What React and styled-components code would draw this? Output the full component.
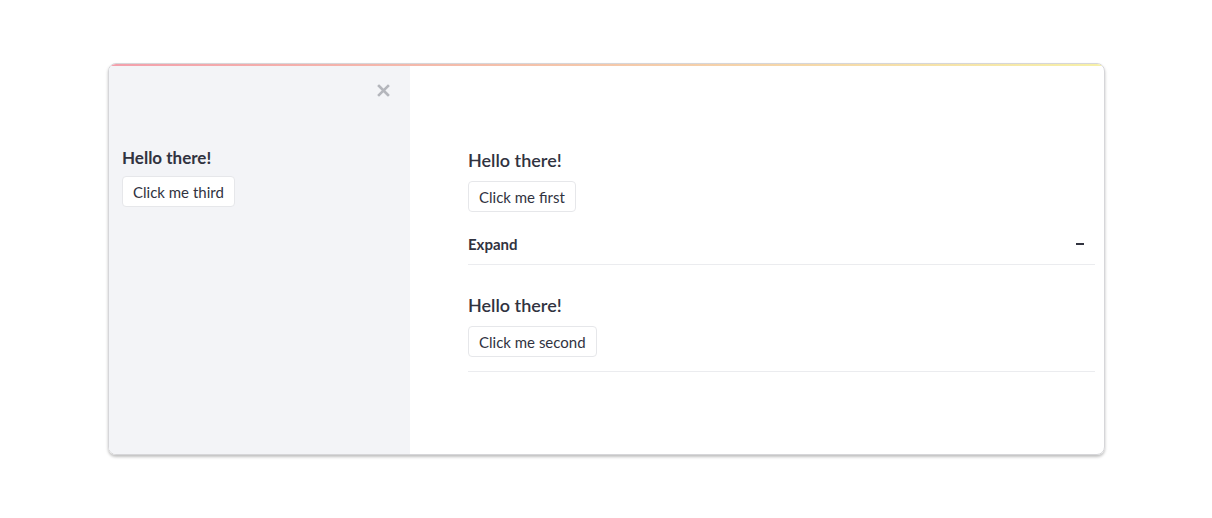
import React from "react";
import styled, { createGlobalStyle } from "styled-components";

const GlobalStyle = createGlobalStyle`
  html, body { margin: 0; padding: 0; background: #ffffff; }
  body { font-family: Lato, "Open Sans", sans-serif; color: #31333f; }
`;

const Page = styled.div`
  width: 1212px;
  height: 518px;
  padding: 63px 0 0 108px;
  box-sizing: border-box;
`;

const Card = styled.div`
  position: relative;
  width: 997px;
  height: 392px;
  display: flex;
  border: 1px solid #d6d6d9;
  border-radius: 8px;
  overflow: hidden;
  box-sizing: border-box;
  box-shadow: 0 2px 3px rgba(0, 0, 0, 0.25);
`;

const Decoration = styled.div`
  position: absolute;
  top: 0;
  left: 0;
  right: 0;
  height: 2px;
  background: linear-gradient(90deg, #f3a0ac, #f6f0a8);
`;

const Sidebar = styled.aside`
  width: 301px;
  flex-shrink: 0;
  background: #f3f4f7;
  padding: 18px 13px 0 13px;
  box-sizing: border-box;
  display: flex;
  flex-direction: column;
`;

const CloseRow = styled.div`
  display: flex;
  justify-content: flex-end;
  padding-right: 6px;
  height: 16px;
  margin-bottom: 49px;
`;

const CloseButton = styled.button`
  border: none;
  background: none;
  padding: 0;
  width: 16px;
  height: 16px;
  display: flex;
  align-items: center;
  justify-content: center;
  cursor: pointer;
`;

const Main = styled.main`
  flex: 1;
  padding: 85px 9px 0 58px;
  display: flex;
  flex-direction: column;
`;

const Heading = styled.h3`
  margin: 0 0 ${(p) => (p.$small ? "7px" : "10px")} 0;
  font-size: ${(p) => (p.$small ? "17px" : "18px")};
  font-weight: ${(p) => (p.$small ? 700 : 600)};
  line-height: 22px;
  color: #31333f;
`;

const Button = styled.button`
  align-self: flex-start;
  font-family: inherit;
  font-size: 15px;
  color: #31333f;
  background: #ffffff;
  border: 1px solid #e6e7ea;
  border-radius: 4px;
  height: 31px;
  padding: 0 10px;
  cursor: pointer;
`;

const ExpanderHeader = styled.div`
  display: flex;
  align-items: center;
  justify-content: space-between;
  margin-top: 12px;
  height: 40px;
  padding-right: 11px;
  border-bottom: 1px solid #ebecef;
  font-size: 15px;
  font-weight: 700;
`;

const Minus = styled.span`
  display: block;
  width: 8px;
  height: 1.5px;
  background: #31333f;
`;

const ExpanderBody = styled.div`
  display: flex;
  flex-direction: column;
  padding-top: 29px;
  padding-bottom: 14px;
  border-bottom: 1px solid #ebecef;
`;

export default function App() {
  return (
    <>
      <GlobalStyle />
      <Page>
        <Card>
          <Decoration />
          <Sidebar>
            <CloseRow>
              <CloseButton aria-label="Close">
                <svg width="13" height="13" viewBox="0 0 13 13">
                  <path d="M2 2 L11 11 M11 2 L2 11" stroke="#b4b6bc" strokeWidth="2.6" strokeLinecap="square" />
                </svg>
              </CloseButton>
            </CloseRow>
            <Heading $small>Hello there!</Heading>
            <Button>Click me third</Button>
          </Sidebar>
          <Main>
            <Heading>Hello there!</Heading>
            <Button>Click me first</Button>
            <ExpanderHeader>
              <span>Expand</span>
              <Minus />
            </ExpanderHeader>
            <ExpanderBody>
              <Heading>Hello there!</Heading>
              <Button>Click me second</Button>
            </ExpanderBody>
          </Main>
        </Card>
      </Page>
    </>
  );
}
